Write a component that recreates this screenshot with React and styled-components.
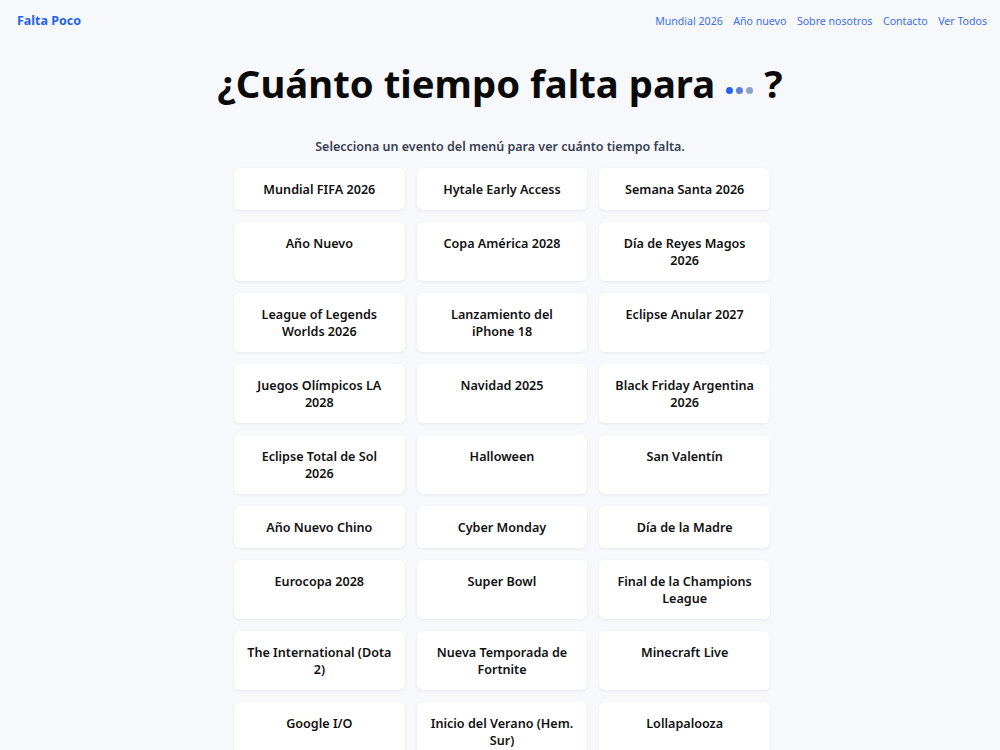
import styled, { createGlobalStyle } from "styled-components";

const GlobalStyle = createGlobalStyle`
  html, body {
    margin: 0;
    padding: 0;
    background: #f7f8fc;
    font-family: "Noto Sans", "Open Sans", sans-serif;
    color: #111827;
  }
`;

const Header = styled.header`
  display: flex;
  justify-content: space-between;
  align-items: center;
  height: 41px;
  padding: 0 13px 0 17px;
`;

const Brand = styled.a`
  font-size: 12.5px;
  font-weight: 700;
  color: #2563eb;
  text-decoration: none;
`;

const Nav = styled.nav`
  display: flex;
  gap: 10.5px;
`;

const NavLink = styled.a`
  font-size: 10.6px;
  color: #3b6fe6;
  text-decoration: none;
`;

const Main = styled.main`
  display: flex;
  flex-direction: column;
  align-items: center;
  padding-top: 17px;
`;

const Title = styled.h1`
  margin: 0;
  font-size: 38.3px;
  font-weight: 700;
  line-height: 50px;
  color: #0a0a0a;
  display: flex;
  align-items: baseline;
  gap: 11px;
`;

const Dots = styled.span`
  display: inline-flex;
  gap: 3px;
  align-self: center;
  margin-top: 14px;
`;

const Dot = styled.span`
  width: 7px;
  height: 7px;
  border-radius: 50%;
  background: ${(p) => p.$color};
`;

const Subtitle = styled.p`
  margin: 30px 0 0;
  font-size: 12.5px;
  font-weight: 600;
  color: #374151;
`;

const Grid = styled.div`
  display: grid;
  grid-template-columns: repeat(3, 1fr);
  gap: 12px;
  width: 536px;
  margin-top: 13px;
  margin-left: 4px;
`;

const Card = styled.div`
  background: #ffffff;
  border-radius: 6px;
  box-shadow: 0 1px 3px rgba(15, 23, 42, 0.07);
  padding: 12.5px 13px;
  text-align: center;
  font-size: 12.6px;
  font-weight: 600;
  line-height: 17px;
  color: #111111;
`;

const events = [
  "Mundial FIFA 2026",
  "Hytale Early Access",
  "Semana Santa 2026",
  "Año Nuevo",
  "Copa América 2028",
  "Día de Reyes Magos 2026",
  "League of Legends Worlds 2026",
  "Lanzamiento del iPhone 18",
  "Eclipse Anular 2027",
  "Juegos Olímpicos LA 2028",
  "Navidad 2025",
  "Black Friday Argentina 2026",
  "Eclipse Total de Sol 2026",
  "Halloween",
  "San Valentín",
  "Año Nuevo Chino",
  "Cyber Monday",
  "Día de la Madre",
  "Eurocopa 2028",
  "Super Bowl",
  "Final de la Champions League",
  "The International (Dota 2)",
  "Nueva Temporada de Fortnite",
  "Minecraft Live",
  "Google I/O",
  "Inicio del Verano (Hem. Sur)",
  "Lollapalooza",
];

const links = ["Mundial 2026", "Año nuevo", "Sobre nosotros", "Contacto", "Ver Todos"];

export default function App() {
  return (
    <>
      <GlobalStyle />
      <Header>
        <Brand href="#">Falta Poco</Brand>
        <Nav>
          {links.map((l) => (
            <NavLink key={l} href="#">
              {l}
            </NavLink>
          ))}
        </Nav>
      </Header>
      <Main>
        <Title>
          ¿Cuánto tiempo falta para
          <Dots>
            <Dot $color="#2563eb" />
            <Dot $color="#5b82d9" />
            <Dot $color="#8ea2c8" />
          </Dots>
          ?
        </Title>
        <Subtitle>Selecciona un evento del menú para ver cuánto tiempo falta.</Subtitle>
        <Grid>
          {events.map((e) => (
            <Card key={e}>{e}</Card>
          ))}
        </Grid>
      </Main>
    </>
  );
}
